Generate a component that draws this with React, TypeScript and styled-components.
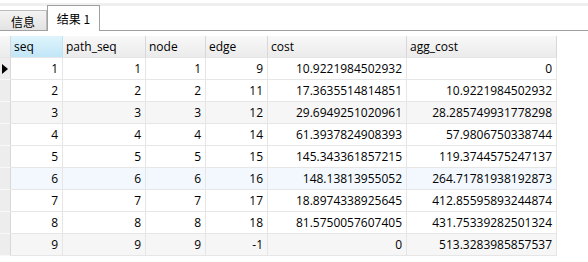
import styled, { createGlobalStyle } from 'styled-components';

const GlobalStyle = createGlobalStyle`
	body {
		margin: 0;
		background: #ffffff;
		font-family: 'Open Sans', 'Noto Sans CJK SC', sans-serif;
		font-size: 12px;
		color: #000000;
	}
`;

const COLS = '11px 52px 83px 60px 62px 139px 150px';

type Row = [number, number, number, number, string, string];

const rows: Row[] = [
	[1, 1, 1, 9, '10.9221984502932', '0'],
	[2, 2, 2, 11, '17.3635514814851', '10.9221984502932'],
	[3, 3, 3, 12, '29.6949251020961', '28.285749931778298'],
	[4, 4, 4, 14, '61.3937824908393', '57.9806750338744'],
	[5, 5, 5, 15, '145.343361857215', '119.3744575247137'],
	[6, 6, 6, 16, '148.13813955052', '264.71781938192873'],
	[7, 7, 7, 17, '18.8974338925645', '412.85595893244874'],
	[8, 8, 8, 18, '81.5750057607405', '431.75339282501324'],
	[9, 9, 9, -1, '0', '513.3283985857537'],
];

const columns = ['seq', 'path_seq', 'node', 'edge', 'cost', 'agg_cost'];

const rowTint = (i: number) => {
	if (i === 5) return '#f2f8fd';
	if (i % 3 === 2) return '#f6f6f6';
	return '#ffffff';
};

const Page = styled.div`
	width: 588px;
	height: 262px;
	overflow: hidden;
	background: #ffffff;
`;

const TabBar = styled.div`
	display: flex;
	align-items: flex-end;
	height: 24px;
	margin-top: 3px;
	border-top: 3px solid #efefef;
	border-bottom: 1px solid #a0a0a0;
	font-family: 'Noto Sans CJK SC', sans-serif;
`;

const Tab = styled.div<{ $active?: boolean }>`
	position: relative;
	z-index: ${(p) => (p.$active ? 1 : 0)};
	display: flex;
	align-items: center;
	justify-content: center;
	box-sizing: border-box;
	width: ${(p) => (p.$active ? '53px' : '47px')};
	height: ${(p) => (p.$active ? '26px' : '20px')};
	margin-bottom: ${(p) => (p.$active ? '-1px' : '0')};
	padding-top: ${(p) => (p.$active ? '0' : '2px')};
	border: 1px solid ${(p) => (p.$active ? '#a0a0a0' : '#bcbcbc')};
	border-bottom: none;
	border-left: ${(p) => (p.$active ? '1px solid #a0a0a0' : 'none')};
	background: ${(p) => (p.$active ? '#ffffff' : 'linear-gradient(#f3f3f3, #e3e3e3)')};
	font-size: 12px;
	color: #000000;
`;

const Grid = styled.div`
	margin-top: 5px;
	width: 557px;
`;

const Line = styled.div<{ $bg?: string }>`
	display: grid;
	grid-template-columns: ${COLS};
	height: 22px;
	background: ${(p) => p.$bg || '#ffffff'};
`;

const HeadCell = styled.div<{ $selected?: boolean }>`
	box-sizing: border-box;
	display: flex;
	align-items: center;
	padding: 0 3px;
	border-right: 1px solid ${(p) => (p.$selected ? '#c2e4f5' : '#d8d8d8')};
	border-bottom: 1px solid #e6e6e6;
	background: ${(p) =>
		p.$selected ? 'linear-gradient(#dff4fc, #c1e6f7)' : 'linear-gradient(#f8f8f8, #ebebeb)'};
	white-space: nowrap;
	font-size: 12px;
`;

const Indicator = styled.div<{ $head?: boolean }>`
	box-sizing: border-box;
	display: flex;
	align-items: center;
	border-right: 1px solid #d8d8d8;
	border-bottom: 1px solid ${(p) => (p.$head ? '#e6e6e6' : '#f8f8f8')};
	background: ${(p) => (p.$head ? 'linear-gradient(#f8f8f8, #ebebeb)' : '#ededed')};
`;

const Pointer = styled.span`
	width: 0;
	height: 0;
	margin-left: 2px;
	border-top: 5px solid transparent;
	border-bottom: 5px solid transparent;
	border-left: 6px solid #000000;
`;

const Cell = styled.div`
	box-sizing: border-box;
	display: flex;
	align-items: center;
	justify-content: flex-end;
	padding: 0 4px;
	border-right: 1px solid #e6e6e6;
	border-bottom: 1px solid #e6e6e6;
	white-space: nowrap;
	font-size: 12px;
`;

export default function App() {
	return (
		<Page>
			<GlobalStyle />
			<TabBar>
				<Tab>信息</Tab>
				<Tab $active>结果 1</Tab>
			</TabBar>
			<Grid>
				<Line>
					<Indicator $head />
					{columns.map((c, i) => (
						<HeadCell key={c} $selected={i === 0}>
							{c}
						</HeadCell>
					))}
				</Line>
				{rows.map((r, i) => (
					<Line key={i} $bg={rowTint(i)}>
						<Indicator>{i === 0 && <Pointer />}</Indicator>
						{r.map((v, j) => (
							<Cell key={j}>{v}</Cell>
						))}
					</Line>
				))}
			</Grid>
		</Page>
	);
}
